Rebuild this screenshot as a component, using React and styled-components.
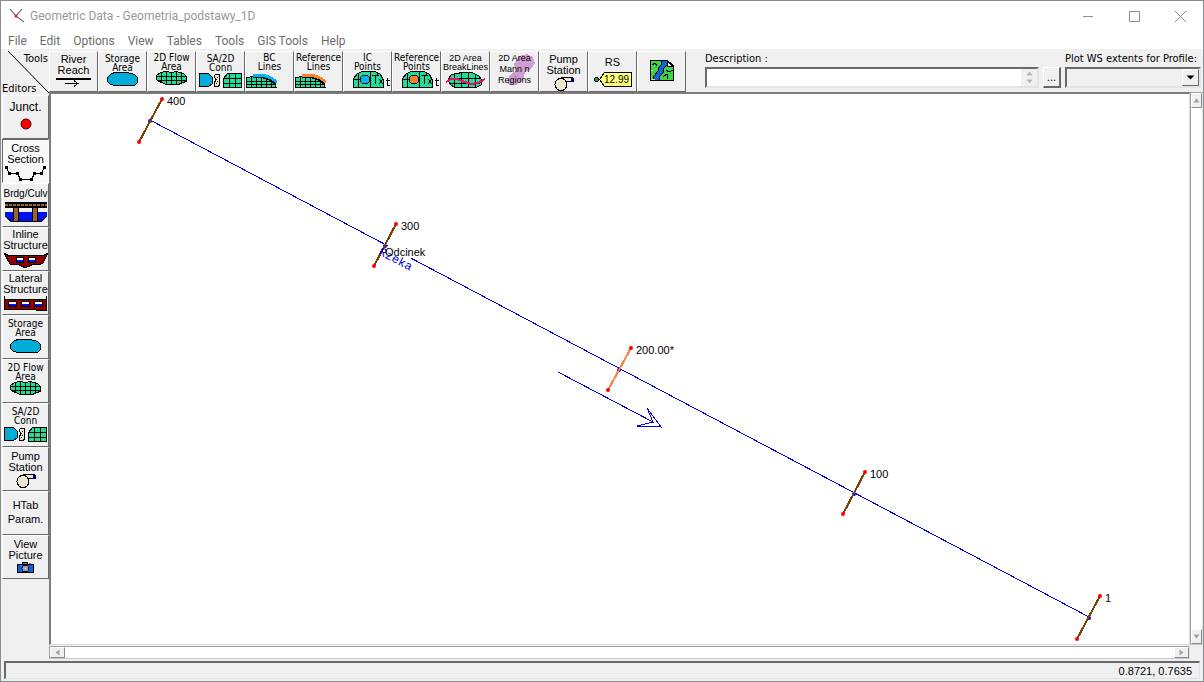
import React from 'react';
import styled, { createGlobalStyle, css } from 'styled-components';

const Global = createGlobalStyle`
  * { box-sizing: border-box; }
  body { margin: 0; background: #f0f0f0; }
  button, input, select, textarea { font: inherit; color: inherit; border-radius: 0; margin: 0; }
`;

const face = '#f0f0f0';
const tahoma = '"DejaVu Sans Condensed", "DejaVu Sans", sans-serif';
const segoe = 'Roboto, "Open Sans", sans-serif';
const arial = '"Liberation Sans", Arial, sans-serif';

const raised = css`
  border: 1px solid;
  border-color: #ffffff #696969 #696969 #ffffff;
  background: ${face};
`;
const sunken = css`
  border: 2px solid;
  border-color: #696969 #e3e3e3 #e3e3e3 #696969;
`;

const Window = styled.div`
  display: flex;
  flex-direction: column;
  min-height: 100vh;
  border: 1px solid #8a8d8f;
  background: ${face};
  font-family: ${arial};
  color: #000;
`;
const TitleBar = styled.header`
  display: flex;
  align-items: center;
  height: 30px;
  padding-left: 8px;
  gap: 5px;
  background: #fff;
`;
const Title = styled.h1`
  flex: 1;
  margin: 0;
  font: 400 12px/16px ${segoe};
  color: #999;
`;
const WindowButton = styled.button`
  display: flex;
  align-items: center;
  justify-content: center;
  width: 46px;
  height: 28px;
  padding: 0;
  border: 0;
  background: transparent;
`;
const MenuBar = styled.nav`
  display: flex;
  align-items: center;
  gap: 13px;
  height: 18px;
  padding-left: 7px;
  background: #fff;
`;
const MenuItem = styled.button`
  padding: 2px 0 0;
  border: 0;
  background: transparent;
  font: 12px/16px ${segoe};
  color: #6d6d6d;
`;
const Body = styled.div`
  flex: 1;
  display: grid;
  grid-template-columns: 48px minmax(0, 1fr);
`;
const Side = styled.aside`
  display: flex;
  flex-direction: column;
`;
const Corner = styled.div`
  position: relative;
  display: flex;
  flex-direction: column;
  justify-content: space-between;
  height: 46px;
  padding: 4px 1px 0;
  font: 11px/12px ${tahoma};
  span:first-of-type { align-self: flex-end; }
  svg { position: absolute; left: 7px; top: 2px; }
`;
const Palette = styled.div`
  display: flex;
  flex-direction: column;
  padding-left: 1px;
`;
const ToolButton = styled.button`
  ${raised}
  position: relative;
  display: flex;
  flex-direction: column;
  align-items: center;
  flex: none;
  width: ${(p) => (p.$side ? 'auto' : '49px')};
  height: ${(p) => (p.$side ? '44px' : '41px')};
  padding: ${(p) => p.$top}px 0 0;
  overflow: hidden;
  white-space: nowrap;
  font-family: ${(p) => (p.$smooth ? tahoma : arial)};
  font-size: ${(p) => p.$size}px;
  line-height: ${(p) => p.$line}px;
  ${(p) => p.$pressed && css`
    background: #f8f8f8;
    border-color: #696969 #fff #fff #696969;
  `}
  svg {
    flex: none;
    margin-top: ${(p) => p.$gap}px;
    align-self: ${(p) => p.$align || 'center'};
  }
`;
const Backdrop = styled.span`
  position: absolute;
  inset: 0;
  svg { margin: 0; display: block; }
`;
const Label = styled.span`
  position: relative;
`;
const Work = styled.main`
  display: flex;
  flex-direction: column;
  min-width: 0;
`;
const Toolbar = styled.div`
  display: flex;
  height: 43px;
  padding: 2px 2px 0 0;
`;
const Field = styled.div`
  display: flex;
  flex-direction: column;
  flex: ${(p) => (p.$grow ? '1' : 'none')};
  width: ${(p) => (p.$grow ? 'auto' : '136px')};
  margin-left: ${(p) => (p.$grow ? '19px' : '4px')};
  label {
    height: 16px;
    white-space: nowrap;
    font: 11px/16px ${tahoma};
  }
`;
const FieldRow = styled.div`
  display: flex;
  gap: 4px;
  height: 21px;
`;
const Memo = styled.div`
  ${sunken}
  display: flex;
  flex: 1;
  background: #fff;
  textarea {
    flex: 1;
    min-width: 0;
    padding: 0;
    border: 0;
    resize: none;
    outline: 0;
    height: 17px;
    overflow: hidden;
    font: 11px/16px ${tahoma};
  }
`;
const Spin = styled.div`
  display: flex;
  flex-direction: column;
  width: 16px;
  background: ${face};
`;
const SpinButton = styled.button`
  flex: 1;
  display: flex;
  align-items: center;
  justify-content: center;
  min-height: 0;
  padding: 0;
  border: 0;
  background: transparent;
`;
const MoreButton = styled.button`
  ${raised}
  width: 18px;
  padding: 0;
  font: 11px/20px ${tahoma};
  border-width: 1px 2px 2px 1px;
`;
const Combo = styled.div`
  ${sunken}
  display: grid;
  flex: 1;
  select {
    grid-area: 1 / 1;
    appearance: none;
    border: 0;
    padding: 0 18px 0 2px;
    background: ${face};
    outline: 0;
    min-width: 0;
  }
`;
const ComboArrow = styled.span`
  ${raised}
  grid-area: 1 / 1;
  justify-self: end;
  display: flex;
  align-items: center;
  justify-content: center;
  width: 17px;
  pointer-events: none;
`;
const Scroller = styled.div`
  flex: 1;
  display: grid;
  grid-template-columns: minmax(0, 1fr) 13px;
  grid-template-rows: minmax(0, 1fr) 13px;
  row-gap: 1px;
`;
const Canvas = styled.section`
  border: 2px solid;
  border-width: 2px 1px 1px 2px;
  border-color: #7c7c7c #dcdcdc #dcdcdc #7c7c7c;
  background: #fff;
  overflow: hidden;
  min-height: 553px;
  svg { display: block; width: 100%; height: 100%; }
`;
const ScrollBar = styled.div`
  display: flex;
  flex-direction: ${(p) => (p.$vertical ? 'column' : 'row')};
  justify-content: space-between;
  background: #fff;
  border: 1px solid;
  border-color: #a0a0a0 #e3e3e3 #c8c8c8 #a0a0a0;
`;
const ScrollButton = styled.button`
  ${raised}
  display: flex;
  align-items: center;
  justify-content: center;
  flex: 0 0 15px;
  padding: 0;
  border-color: #fff #8a8a8a #8a8a8a #fff;
`;
const StatusBar = styled.footer`
  padding: 2px 3px 2px;
`;
const StatusPanel = styled.div`
  ${sunken}
  border-width: 2px 1px 1px 2px;
  height: 18px;
  padding-right: 7px;
  font: 11px/17px ${arial};
  text-align: right;
`;

const Svg = ({ w, h, children }) => (
  <svg width={w} height={h} viewBox={`0 0 ${w} ${h}`} fill="none" stroke="#000" shapeRendering="crispEdges" aria-hidden="true">
    {children}
  </svg>
);

const Triangle = ({ dir, color = '#a0a0a0', w = 5 }) => {
  const turn = { up: 0, right: 90, down: 180, left: 270 }[dir];
  return (
    <svg width="9" height="9" viewBox="-4.5 -4.5 9 9" aria-hidden="true">
      <path d={`M${-w / 2 - 0.5} 2L0 -2L${w / 2 + 0.5} 2Z`} fill={color} transform={`rotate(${turn})`} />
    </svg>
  );
};

const PondIcon = () => (
  <Svg w={31} h={14}>
    <path d="M4.500 1.500L8.500 .5H20.500L27.500 2.500L30.500 5.500V10.500L27.500 13.500H8.500L3.500 12.500L.5 9.500V5.500Z" fill="#00add6" />
  </Svg>
);
const MeshIcon = () => (
  <Svg w={31} h={14}>
    <path d="M4.500 1.500L9.500 .5L15.500 1.500L20.500 .5L27.500 2.500L30.500 5.500V10.500L26.500 11.500L22.500 13.500H9.500L6.500 11.500L2.500 10.500L.5 8.500V4.500Z" fill="#1fdc98" />
    <path d="M1 5.500H30M1 9.500H30M5.500 2V11M10.500 1V13M15.500 1V13M20.500 1V13M25.500 2V12" />
  </Svg>
);
const ConnIcon = () => (
  <Svg w={43} h={15}>
    <path d="M.5 .5H9.500L13.500 4.500V10.500L9.500 13.500H.5Z" fill="#00add6" />
    <path d="M15.500 2.500L16.500 1.500H20.500V12.500L18.500 13.500H15.500V9.500L16.500 7.500Z" fill="#efe6d2" />
    <path d="M18 4.500h1M17 6.500h1M18 8.500h1M17 10.500h1" />
    <path d="M24.500 5.500L28.500 .5H42.500V14.500H24.500Z" fill="#1fdc98" />
    <path d="M24 5.500H42M24 10.500H42M30.500 1V14M36.500 1V14" />
  </Svg>
);
const LinesIcon = ({ color }) => (
  <Svg w={34} h={15}>
    <path d="M.5 4.500L8.500 3.500L18.500 4.500L26.500 8.500L30.500 14.500H.5Z" fill="#1fdc98" />
    <path d="M1 8.500H26M1 11.500H29M5.500 4V14M10.500 4V14M15.500 4V14M20.500 5V14M25.500 8V14" />
    <path d="M7 4L16 4L25 7L30 12" strokeWidth="2" />
    <path d="M7 2H17L25 5L31 9" stroke={color} strokeWidth="3" />
  </Svg>
);
const PointsIcon = ({ color }) => (
  <Svg w={38} h={17}>
    <path d="M.5 16.500V7.500L4.500 2.500L9.500 .5H22.500L27.500 3.500L30.500 9.500V16.500Z" fill="#1fdc98" />
    <path d="M1 8.500H18M5.500 2V16M17.500 1V16M24.500 1V5" />
    <circle cx="12" cy="8.500" r="4.500" fill={color} />
    <path d="M18.500 4.500H26M22.500 4.500V13M26 8L30 13M30 8L26 13" />
    <path d="M34.500 7V14.500H37M32.500 9.500H37" />
  </Svg>
);
const BreakIcon = () => (
  <Svg w={40} h={16}>
    <path d="M5.500 2.500L11.500 1.500L15.500 .5H25.500L32.500 3.500L35.500 7.500V12.500L30.500 15.500H8.500L4.500 12.500L2.500 9.500V6.500Z" fill="#1fdc98" />
    <path d="M3 6.500H34M3 11.500H34M8.500 2V15M15.500 1V15M22.500 1V15M29.500 2V15" />
    <path d="M0 10L5 7H11L19 10L25 12L32 11L39 7" stroke="#ef0a70" strokeWidth="2" />
  </Svg>
);
const ManningBlob = () => (
  <Svg w={49} h={41}>
    <path d="M28 4L36 2L42 5L44 11L40 17L34 20L32 28L25 33L18 33L16 28L20 22L25 19L23 12Z" fill="#d09ed2" stroke="none" />
  </Svg>
);
const PumpIcon = () => (
  <Svg w={20} h={14}>
    <path d="M7.500 .5H18.500V4.500H11Z" fill="#ece5cf" />
    <circle cx="7" cy="7.500" r="6" fill="#ece5cf" />
    <path d="M18 1V5" stroke="#00007f" strokeWidth="3" />
  </Svg>
);
const TagIcon = () => (
  <Svg w={38} h={16}>
    <path d="M5.500 7.500L10.500 .5H37.500V14.500H10.500Z" fill="#ffff7b" />
    <circle cx="2.500" cy="7.500" r="2" fill="#18a018" />
    <text x="10" y="11" fontSize="10" fontFamily="Liberation Sans, sans-serif" fill="#000" stroke="none">12.99</text>
  </Svg>
);
const MapIcon = () => (
  <Svg w={24} h={22}>
    <path d="M.5 1.500H17.500L23.500 6.500V21.500H.5Z" fill="#3fd24a" />
    <path d="M11 2H18L17 6L13 10V14L10 17L9 21H3L4 17L8 12V9L11 6Z" fill="#1464dc" stroke="none" />
    <path d="M11 2L11 6L8 9V12L4 17L3 21M17 6L13 10V14L10 17L9 21" />
    <path d="M17.500 2V7.500H23Z" fill="#fff" />
    <path d="M2 6L5 4L7 7M16 11L19 13L23 11M13 18L17 15L18 20" />
    <path d="M1 20.500H5M1 11.500H3" stroke="#f2e23c" />
  </Svg>
);
const ReachIcon = () => (
  <Svg w={35} h={9}>
    <path d="M0 1H35" strokeWidth="2" />
    <path d="M9 5.500H22M18 2.500L22 5.500L18 8.500" />
  </Svg>
);
const JunctionIcon = () => (
  <svg width="12" height="12" viewBox="0 0 12 12" aria-hidden="true">
    <circle cx="6" cy="6" r="5" fill="#f00" stroke="#400" />
  </svg>
);
const SectionIcon = () => (
  <Svg w={41} h={17}>
    <path d="M1 2L4 8.500H12.500L15.500 14.500H26.500L29.500 8.500H36L40 2" />
    {[[1, 2], [4, 8], [12, 8], [15, 14], [26, 14], [29, 8], [36, 8], [39, 2]].map(([x, y]) => (
      <rect key={`${x}-${y}`} x={x - 1} y={y - 1} width="3" height="3" fill="#000" stroke="none" />
    ))}
  </Svg>
);
const BridgeIcon = () => (
  <Svg w={42} h={21}>
    <path d="M0 10H42V14L36 19H6L0 14Z" fill="#0010f0" stroke="none" />
    <path d="M0 14L6 19.500H36L42 14" />
    <rect x="8.500" y="5" width="5" height="14" fill="#9a642c" />
    <rect x="27.500" y="5" width="5" height="14" fill="#9a642c" />
    <path d="M0 3H42" strokeWidth="6" />
    <path d="M0 3H42" stroke="#9a642c" strokeWidth="2" strokeDasharray="3 1" />
  </Svg>
);
const InlineIcon = () => (
  <Svg w={44} h={17}>
    <path d="M.5 1.500L4.500 3.500H39.500L43.500 1.500L39.500 10.500L36.500 12.500H28.500L24.500 14.500L20.500 15.500L14.500 12.500H6.500L4.500 9.500Z" fill="#8e0000" />
    <rect x="12.500" y="5.500" width="7" height="5" fill="#fff" />
    <rect x="24.500" y="5.500" width="7" height="5" fill="#fff" />
    <path d="M13 9H19M25 9H31" stroke="#0010f0" strokeWidth="2" />
  </Svg>
);
const LateralIcon = () => (
  <Svg w={43} h={16}>
    <path d="M.5 3.500H42.500V14.500L20.500 13.500H.5Z" fill="#8e0000" />
    <path d="M.5 0V4M42.500 0V4" />
    {[4, 17, 30].map((x) => (
      <g key={x}>
        <rect x={x + 0.5} y="5.500" width="8" height="5" fill="#fff" />
        <path d={`M${x + 1} 9H${x + 8}`} stroke="#0010f0" strokeWidth="2" />
      </g>
    ))}
  </Svg>
);
const CameraIcon = () => (
  <Svg w={17} h={12}>
    <rect x=".5" y="2.500" width="16" height="8" fill="#0f62e8" />
    <path d="M5.500 2V.5H10.500V2" fill="#777" />
    <circle cx="8.500" cy="6.500" r="3.500" fill="#8fa4b8" />
    <circle cx="8.500" cy="6.500" r="1" fill="#fff" stroke="none" />
    <path d="M12 1.500H14" stroke="#e33" />
  </Svg>
);

const smooth = { $smooth: true, $size: 10, $line: 9, $top: 2, $gap: 2 };
const plain = { $size: 11, $line: 11, $top: 3, $gap: 1 };

const tools = [
  { lines: ['River', 'Reach'], icon: <ReachIcon />, look: { ...plain, $top: 2, $gap: 2 } },
  { lines: ['Storage', 'Area'], icon: <PondIcon />, look: { ...smooth, $gap: 0 } },
  { lines: ['2D Flow', 'Area'], icon: <MeshIcon />, look: { ...smooth, $top: 1, $gap: 0 } },
  { lines: ['SA/2D', 'Conn'], icon: <ConnIcon />, look: { ...smooth, $gap: 1 } },
  { lines: ['BC', 'Lines'], icon: <LinesIcon color="#00b4ff" />, look: { ...smooth, $top: 1, $align: 'flex-start' } },
  { lines: ['Reference', 'Lines'], icon: <LinesIcon color="#ff7f27" />, look: { ...smooth, $top: 1, $align: 'flex-start' } },
  { lines: ['IC', 'Points'], icon: <PointsIcon color="#00b4ff" />, look: { ...smooth, $top: 1, $gap: 0, $align: 'flex-end' } },
  { lines: ['Reference', 'Points'], icon: <PointsIcon color="#ff7f27" />, look: { ...smooth, $top: 1, $gap: 0, $align: 'flex-end' } },
  { lines: ['2D Area', 'BreakLines'], icon: <BreakIcon />, look: { ...plain, $size: 9, $line: 9, $top: 2, $gap: 0 } },
  { lines: ['2D Area', 'Mann n', 'Regions'], back: <ManningBlob />, look: { ...plain, $size: 9, $top: 1 } },
  { lines: ['Pump', 'Station'], icon: <PumpIcon />, look: { ...plain, $top: 2 } },
  { lines: ['RS'], icon: <TagIcon />, look: { ...plain, $top: 5, $gap: 4 } },
  { lines: [], name: 'Background map', icon: <MapIcon />, look: { ...plain, $top: 7, $gap: 0 } },
];
const editors = [
  { lines: ['Junct.'], icon: <JunctionIcon />, look: { ...plain, $size: 12, $top: 6, $gap: 5 } },
  { lines: ['Cross', 'Section'], icon: <SectionIcon />, look: { ...plain, $gap: 0 }, pressed: true },
  { lines: ['Brdg/Culv'], icon: <BridgeIcon />, look: { ...plain, $size: 10, $top: 4, $gap: 3 } },
  { lines: ['Inline', 'Structure'], icon: <InlineIcon />, look: { ...plain, $top: 1 } },
  { lines: ['Lateral', 'Structure'], icon: <LateralIcon />, look: { ...plain, $top: 1 } },
  { lines: ['Storage', 'Area'], icon: <PondIcon />, look: { ...smooth, $top: 3 } },
  { lines: ['2D Flow', 'Area'], icon: <MeshIcon />, look: { ...smooth, $top: 3, $gap: 0 } },
  { lines: ['SA/2D', 'Conn'], icon: <ConnIcon />, look: { ...smooth, $top: 3 } },
  { lines: ['Pump', 'Station'], icon: <PumpIcon />, look: plain },
  { lines: ['HTab', 'Param.'], look: { ...plain, $line: 14, $top: 6 } },
  { lines: ['View', 'Picture'], icon: <CameraIcon />, look: plain },
];

const Tool = ({ item, side }) => (
  <ToolButton type="button" $side={side} $pressed={item.pressed} aria-pressed={item.pressed} aria-label={item.name} {...item.look}>
    {item.back && <Backdrop>{item.back}</Backdrop>}
    {item.lines.map((line) => <Label key={line}>{line}</Label>)}
    {item.icon}
  </ToolButton>
);

const stations = [
  { name: '400', top: [111, 5], mid: [99, 27], end: [88, 48] },
  { name: '300', top: [345, 130], mid: [334, 152], end: [323, 172] },
  { name: '200.00*', top: [580, 254], mid: [568, 276], end: [557, 296], interpolated: true },
  { name: '100', top: [814, 378], mid: [803, 400], end: [792, 420] },
  { name: '1', top: [1049, 502], mid: [1038, 524], end: [1026, 545] },
];

const Schematic = () => (
  <svg role="img" aria-label="River schematic" fontFamily={arial} fontSize="11">
    <path d="M99 26L1038 523" stroke="#0000e6" shapeRendering="crispEdges" />
    <path d="M507 278L602 328L596 314L610 333L586 332L602 328" fill="none" stroke="#0000e6" shapeRendering="crispEdges" />
    <rect x="336" y="152" width="38" height="12" fill="#fff" />
    {stations.map((s) => (
      <g key={s.name}>
        <circle cx={s.mid[0]} cy={s.mid[1]} r="2" fill="#0000e6" />
        <path d={`M${s.top.join(' ')}L${s.end.join(' ')}`} stroke={s.interpolated ? '#ff7f40' : '#7b3f00'} strokeWidth="2" shapeRendering="crispEdges" />
        <circle cx={s.top[0]} cy={s.top[1]} r="2" fill="#f00" />
        <circle cx={s.end[0]} cy={s.end[1]} r="2" fill="#f00" />
        <text x={s.top[0] + 5} y={s.top[1] + 6}>{s.name}</text>
      </g>
    ))}
    <text transform="translate(327 160) rotate(28)" fontFamily="Liberation Mono, monospace" fontSize="12" fill="#0000e6">Rzeka</text>
    <text x="334" y="162">Odcinek</text>
  </svg>
);

const ControlRow = styled.div`
  display: flex;
`;

const glyphs = [
  ['Minimize', 'M0 5.500H10'],
  ['Maximize', 'M.5 .5H10.500V10.500H.5Z'],
  ['Close', 'M0 0L11 11M11 0L0 11'],
];
const Controls = () => (
  <ControlRow>
    {glyphs.map(([name, d]) => (
      <WindowButton key={name} type="button" aria-label={name}>
        <svg width="11" height="11" viewBox="0 0 11 11" fill="none" stroke="#8e8e8e"><path d={d} /></svg>
      </WindowButton>
    ))}
  </ControlRow>
);

export default function App() {
  return (
    <>
      <Global />
      <Window>
        <TitleBar>
          <svg width="16" height="16" viewBox="0 0 16 16" fill="none" aria-hidden="true">
            <path d="M1 1L7 8L15 14M13 1L7 8" stroke="#333" />
            <circle cx="7" cy="8" r="1.500" fill="#f00" />
          </svg>
          <Title>Geometric Data - Geometria_podstawy_1D</Title>
          <Controls />
        </TitleBar>
        <MenuBar>
          {['File', 'Edit', 'Options', 'View', 'Tables', 'Tools', 'GIS Tools', 'Help'].map((m) => (
            <MenuItem key={m} type="button">{m}</MenuItem>
          ))}
        </MenuBar>
        <Body>
          <Side>
            <Corner>
              <svg width="41" height="42" viewBox="0 0 41 42" stroke="#000" aria-hidden="true"><path d="M0 0L41 42" /></svg>
              <span>Tools</span>
              <span>Editors</span>
            </Corner>
            <Palette>
              {editors.map((e) => <Tool key={e.lines.join(' ')} item={e} side />)}
            </Palette>
          </Side>
          <Work>
            <Toolbar>
              {tools.map((t) => <Tool key={t.lines.join(' ')} item={t} />)}
              <Field $grow>
                <label htmlFor="description">Description :</label>
                <FieldRow>
                  <Memo>
                    <textarea id="description" rows={1} />
                    <Spin>
                      <SpinButton type="button" aria-label="Scroll up"><Triangle dir="up" color="#b4b4b4" /></SpinButton>
                      <SpinButton type="button" aria-label="Scroll down"><Triangle dir="down" color="#b4b4b4" /></SpinButton>
                    </Spin>
                  </Memo>
                  <MoreButton type="button" aria-label="Edit description">...</MoreButton>
                </FieldRow>
              </Field>
              <Field>
                <label htmlFor="profile">Plot WS extents for Profile:</label>
                <FieldRow>
                  <Combo>
                    <select id="profile"><option value="" /></select>
                    <ComboArrow><Triangle dir="down" color="#000" w={7} /></ComboArrow>
                  </Combo>
                </FieldRow>
              </Field>
            </Toolbar>
            <Scroller>
              <Canvas><Schematic /></Canvas>
              <ScrollBar $vertical>
                <ScrollButton type="button" aria-label="Up"><Triangle dir="up" /></ScrollButton>
                <ScrollButton type="button" aria-label="Down"><Triangle dir="down" /></ScrollButton>
              </ScrollBar>
              <ScrollBar>
                <ScrollButton type="button" aria-label="Left"><Triangle dir="left" /></ScrollButton>
                <ScrollButton type="button" aria-label="Right"><Triangle dir="right" /></ScrollButton>
              </ScrollBar>
            </Scroller>
          </Work>
        </Body>
        <StatusBar>
          <StatusPanel>0.8721, 0.7635</StatusPanel>
        </StatusBar>
      </Window>
    </>
  );
}
